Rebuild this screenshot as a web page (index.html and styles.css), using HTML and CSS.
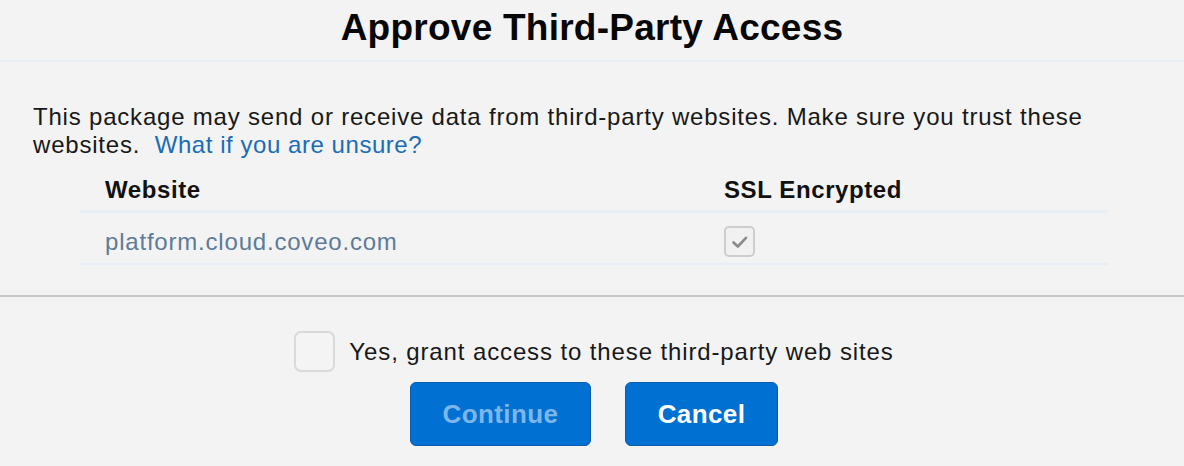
FILE: index.html
```html
<!DOCTYPE html>
<html lang="en">
<head>
<meta charset="utf-8">
<title>Approve Third-Party Access</title>
<link rel="stylesheet" href="styles.css">
</head>
<body>
<div class="dialog">
  <header class="dialog-header">
    <h1 class="title">Approve Third-Party Access</h1>
  </header>
  <section class="dialog-body">
    <p class="intro">This package may send or receive data from third-party websites. Make sure you trust these websites. <a class="link" href="#">What if you are unsure?</a></p>
    <div class="sites">
      <div class="row head">
        <div class="cell">Website</div>
        <div class="cell">SSL Encrypted</div>
      </div>
      <div class="row item">
        <div class="cell site">platform.cloud.coveo.com</div>
        <div class="cell">
          <span class="check-small">
            <svg viewBox="0 0 20 20" width="20" height="20"><path d="M3.5 10.5 L7.8 14.5 L16 5.8" fill="none" stroke="#8a8a8a" stroke-width="2.6" stroke-linecap="round" stroke-linejoin="round"/></svg>
          </span>
        </div>
      </div>
    </div>
  </section>
  <footer class="dialog-footer">
    <label class="grant">
      <span class="check-big"></span>
      <span class="grant-text">Yes, grant access to these third-party web sites</span>
    </label>
    <div class="buttons">
      <button class="btn btn-disabled" type="button">Continue</button>
      <button class="btn btn-cancel" type="button">Cancel</button>
    </div>
  </footer>
</div>
</body>
</html>
```
FILE: styles.css
```css
html, body {
  margin: 0;
  padding: 0;
  background: #f3f3f3;
}
body {
  font-family: "Liberation Sans", Arial, Helvetica, sans-serif;
  color: #181818;
  width: 1184px;
  height: 466px;
  overflow: hidden;
}
.dialog-header {
  padding-top: 7px;
  padding-bottom: 11px;
  border-bottom: 2px solid #e7eef6;
}
.title {
  margin: 0;
  text-align: center;
  font-size: 37px;
  line-height: 42px;
  font-weight: 700;
  letter-spacing: 0.25px;
  color: #080707;
}
.dialog-body {
  padding: 41px 0 0 33px;
}
.intro {
  margin: 0;
  width: 1118px;
  font-size: 24px;
  line-height: 28px;
  letter-spacing: 0.8px;
  color: #181818;
}
.link {
  margin-left: 7px;
  color: #1a6cb7;
  text-decoration: none;
  letter-spacing: 0.55px;
}
.sites {
  margin-top: 17px;
  margin-left: 47px;
  width: 1028px;
}
.row {
  display: grid;
  grid-template-columns: 619px 1fr;
}
.cell {
  padding-left: 25px;
  font-size: 24px;
  line-height: 28px;
  letter-spacing: 0.8px;
}
.head {
  padding-bottom: 6px;
  border-bottom: 3px solid #e6eef6;
}
.head .cell {
  font-weight: 700;
  letter-spacing: 0.6px;
  color: #111;
}
.item {
  align-items: center;
  padding-top: 13px;
  padding-bottom: 6px;
  border-bottom: 2px solid #e8eef5;
}
.site {
  color: #5d7b98;
}
.check-small {
  box-sizing: border-box;
  width: 31px;
  height: 31px;
  border: 2px solid #cdcdcd;
  border-radius: 5px;
  background: #f1f1f1;
  display: flex;
  align-items: center;
  justify-content: center;
}
.check-small svg {
  display: block;
}
.dialog-footer {
  margin-top: 30px;
  border-top: 2px solid #c6c6c6;
  padding: 34px 0 0 4px;
  display: flex;
  flex-direction: column;
  align-items: center;
}
.grant {
  display: flex;
  align-items: center;
  gap: 14px;
}
.check-big {
  box-sizing: border-box;
  width: 41px;
  height: 41px;
  border: 2px solid #d9d9d9;
  border-radius: 7px;
  background: #f4f4f4;
}
.grant-text {
  font-size: 24px;
  line-height: 28px;
  letter-spacing: 0.88px;
  color: #181818;
}
.buttons {
  margin-top: 10px;
  display: flex;
  gap: 34px;
}
.btn {
  box-sizing: border-box;
  height: 64px;
  padding: 0;
  border: 1px solid #0b5cab;
  border-radius: 6px;
  background: #0070d2;
  color: #ffffff;
  font-family: "Liberation Sans", Arial, Helvetica, sans-serif;
  font-size: 26px;
  font-weight: 700;
  letter-spacing: 0.4px;
}
.btn-disabled {
  width: 181px;
  color: #7db6ea;
}
.btn-cancel {
  width: 153px;
}
```
